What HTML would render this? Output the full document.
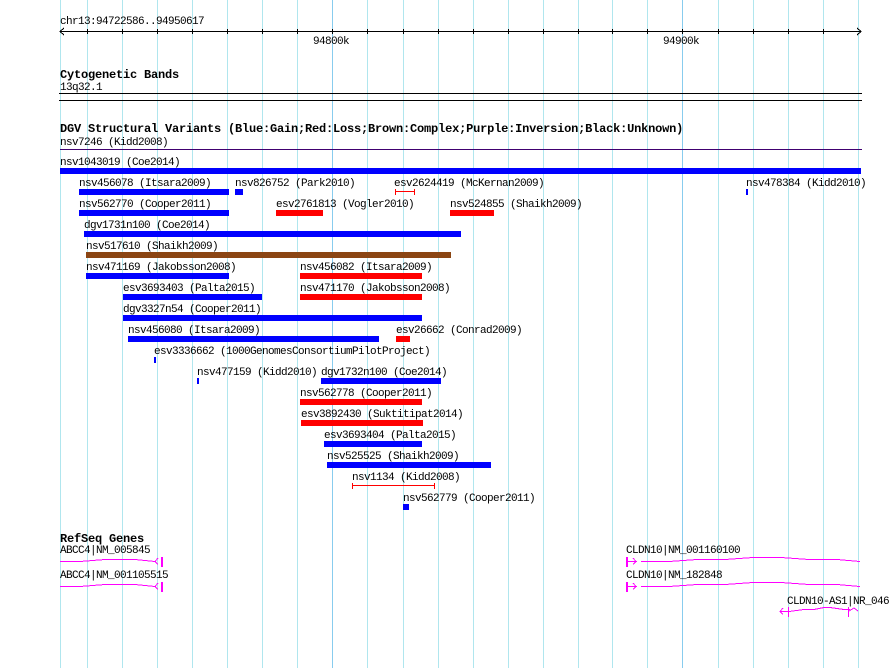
<!DOCTYPE html>
<html><head><meta charset="utf-8"><style>
html,body{margin:0;padding:0;background:#fff;width:890px;height:668px;overflow:hidden}
svg text{font-family:"Liberation Mono",monospace;font-size:11px;letter-spacing:-0.6px;fill:#000}
svg text.b{font-weight:bold;font-size:12px;letter-spacing:-0.2px}
</style></head><body>
<svg width="890" height="668" xmlns="http://www.w3.org/2000/svg" shape-rendering="crispEdges">
<g id="grid" stroke="#b0e6ee" stroke-width="1">
<line x1="60.5" y1="0" x2="60.5" y2="668"/>
<line x1="87.5" y1="0" x2="87.5" y2="668"/>
<line x1="122.5" y1="0" x2="122.5" y2="668"/>
<line x1="157.5" y1="0" x2="157.5" y2="668"/>
<line x1="192.5" y1="0" x2="192.5" y2="668"/>
<line x1="227.5" y1="0" x2="227.5" y2="668"/>
<line x1="262.5" y1="0" x2="262.5" y2="668"/>
<line x1="297.5" y1="0" x2="297.5" y2="668"/>
<line x1="332.5" y1="0" x2="332.5" y2="668" stroke="#88ccee"/>
<line x1="367.5" y1="0" x2="367.5" y2="668"/>
<line x1="403.5" y1="0" x2="403.5" y2="668"/>
<line x1="438.5" y1="0" x2="438.5" y2="668"/>
<line x1="473.5" y1="0" x2="473.5" y2="668"/>
<line x1="508.5" y1="0" x2="508.5" y2="668"/>
<line x1="543.5" y1="0" x2="543.5" y2="668"/>
<line x1="578.5" y1="0" x2="578.5" y2="668"/>
<line x1="612.5" y1="0" x2="612.5" y2="668"/>
<line x1="647.5" y1="0" x2="647.5" y2="668"/>
<line x1="682.5" y1="0" x2="682.5" y2="668" stroke="#88ccee"/>
<line x1="718.5" y1="0" x2="718.5" y2="668"/>
<line x1="753.5" y1="0" x2="753.5" y2="668"/>
<line x1="788.5" y1="0" x2="788.5" y2="668"/>
<line x1="823.5" y1="0" x2="823.5" y2="668"/>
<line x1="858.5" y1="0" x2="858.5" y2="668"/>
</g>
<text x="60" y="24">chr13:94722586..94950617</text>
<g stroke="#000">
<line x1="60" y1="31.5" x2="861" y2="31.5"/>
<polyline points="64,28 60,31.5 64,35" fill="none"/>
<polyline points="857,28 861,31.5 857,35" fill="none"/>
<path d="M87.5 29v5M122.5 29v5M157.5 29v5M192.5 29v5M227.5 29v5M262.5 29v5M297.5 29v5M332.5 29v5M367.5 29v5M403.5 29v5M438.5 29v5M473.5 29v5M508.5 29v5M543.5 29v5M578.5 29v5M612.5 29v5M647.5 29v5M682.5 29v5M718.5 29v5M753.5 29v5M788.5 29v5M823.5 29v5"/>
</g>
<text x="313" y="44">94800k</text>
<text x="663" y="44">94900k</text>
<text class="b" x="60" y="78">Cytogenetic Bands</text>
<text x="60" y="90">13q32.1</text>
<rect x="59" y="93" width="803" height="1" fill="#000"/>
<rect x="59" y="100" width="803" height="1" fill="#000"/>
<text class="b" x="60" y="132">DGV Structural Variants (Blue:Gain;Red:Loss;Brown:Complex;Purple:Inversion;Black:Unknown)</text>
<text x="60" y="145">nsv7246 (Kidd2008)</text>
<rect x="60" y="149" width="802" height="1" fill="#400070"/>
<text x="60" y="165">nsv1043019 (Coe2014)</text>
<rect x="60" y="168" width="801" height="6" fill="#0000ff"/>

<text x="79" y="186">nsv456078 (Itsara2009)</text>
<rect x="79" y="189" width="150" height="6" fill="#0000ff"/>
<text x="235" y="186">nsv826752 (Park2010)</text>
<rect x="235" y="189" width="8" height="6" fill="#0000ff"/>
<text x="394" y="186">esv2624419 (McKernan2009)</text>
<path d="M395 191.5h20M395.5 189v6M414.5 189v6" stroke="#f00"/>
<text x="746" y="186">nsv478384 (Kidd2010)</text>
<rect x="746" y="189" width="2" height="6" fill="#0000ff"/>

<text x="79" y="207">nsv562770 (Cooper2011)</text>
<rect x="79" y="210" width="150" height="6" fill="#0000ff"/>
<text x="276" y="207">esv2761813 (Vogler2010)</text>
<rect x="276" y="210" width="47" height="6" fill="#f00"/>
<text x="450" y="207">nsv524855 (Shaikh2009)</text>
<rect x="450" y="210" width="44" height="6" fill="#f00"/>

<text x="84" y="228">dgv1731n100 (Coe2014)</text>
<rect x="84" y="231" width="377" height="6" fill="#0000ff"/>

<text x="86" y="249">nsv517610 (Shaikh2009)</text>
<rect x="86" y="252" width="365" height="6" fill="#8b4513"/>

<text x="86" y="270">nsv471169 (Jakobsson2008)</text>
<rect x="86" y="273" width="143" height="6" fill="#0000ff"/>
<text x="300" y="270">nsv456082 (Itsara2009)</text>
<rect x="300" y="273" width="122" height="6" fill="#f00"/>

<text x="123" y="291">esv3693403 (Palta2015)</text>
<rect x="123" y="294" width="139" height="6" fill="#0000ff"/>
<text x="300" y="291">nsv471170 (Jakobsson2008)</text>
<rect x="300" y="294" width="122" height="6" fill="#f00"/>

<text x="123" y="312">dgv3327n54 (Cooper2011)</text>
<rect x="123" y="315" width="299" height="6" fill="#0000ff"/>

<text x="128" y="333">nsv456080 (Itsara2009)</text>
<rect x="128" y="336" width="251" height="6" fill="#0000ff"/>
<text x="396" y="333">esv26662 (Conrad2009)</text>
<rect x="396" y="336" width="14" height="6" fill="#f00"/>

<text x="154" y="354">esv3336662 (1000GenomesConsortiumPilotProject)</text>
<rect x="154" y="357" width="2" height="6" fill="#0000ff"/>

<text x="197" y="375">nsv477159 (Kidd2010)</text>
<rect x="197" y="378" width="2" height="6" fill="#0000ff"/>
<text x="321" y="375">dgv1732n100 (Coe2014)</text>
<rect x="321" y="378" width="120" height="6" fill="#0000ff"/>

<text x="300" y="396">nsv562778 (Cooper2011)</text>
<rect x="300" y="399" width="122" height="6" fill="#f00"/>

<text x="301" y="417">esv3892430 (Suktitipat2014)</text>
<rect x="301" y="420" width="122" height="6" fill="#f00"/>

<text x="324" y="438">esv3693404 (Palta2015)</text>
<rect x="324" y="441" width="98" height="6" fill="#0000ff"/>

<text x="327" y="459">nsv525525 (Shaikh2009)</text>
<rect x="327" y="462" width="164" height="6" fill="#0000ff"/>

<text x="352" y="480">nsv1134 (Kidd2008)</text>
<path d="M352 485.5h83M352.5 483v6M434.5 483v6" stroke="#f00"/>

<text x="403" y="501">nsv562779 (Cooper2011)</text>
<rect x="403" y="504" width="6" height="6" fill="#0000ff"/>

<text class="b" x="60" y="542">RefSeq Genes</text>
<text x="60" y="553">ABCC4|NM_005845</text>
<text x="60" y="578">ABCC4|NM_001105515</text>
<text x="626" y="553">CLDN10|NM_001160100</text>
<text x="626" y="578">CLDN10|NM_182848</text>
<text x="787" y="604">CLDN10-AS1|NR_046</text>
<g fill="none" stroke="#ff00ff" stroke-width="1">
<path d="M60 561.5h20l25-2h30l20 2"/>
<path d="M161.5 557v10M162.5 557v10M158 558l-3 3.5 3 3"/>
<path d="M60 586.5h20l25-2h30l20 2"/>
<path d="M161.5 582v10M162.5 582v10M158 583l-3 3.5 3 3"/>
<path d="M627.5 557v10M626.5 557v10M627 561.5h10M633 558l3 3.5-3 3M641 561.5h28l28-2h28l28-2h28l28 2h28l23 2"/>
<path d="M627.5 582v10M626.5 582v10M627 586.5h10M633 583l3 3.5-3 3M641 586.5h28l28-2h28l28-2h28l28 2h28l23 2"/>
<path d="M780 611.5h8M783 608l-3 3.5 3 3M788.5 607v10M789 611.5l15-2h10l10-2h6l14 2h6M848.5 607v10M849 611l5-3 4 3"/>
</g>
</svg>
</body></html>
